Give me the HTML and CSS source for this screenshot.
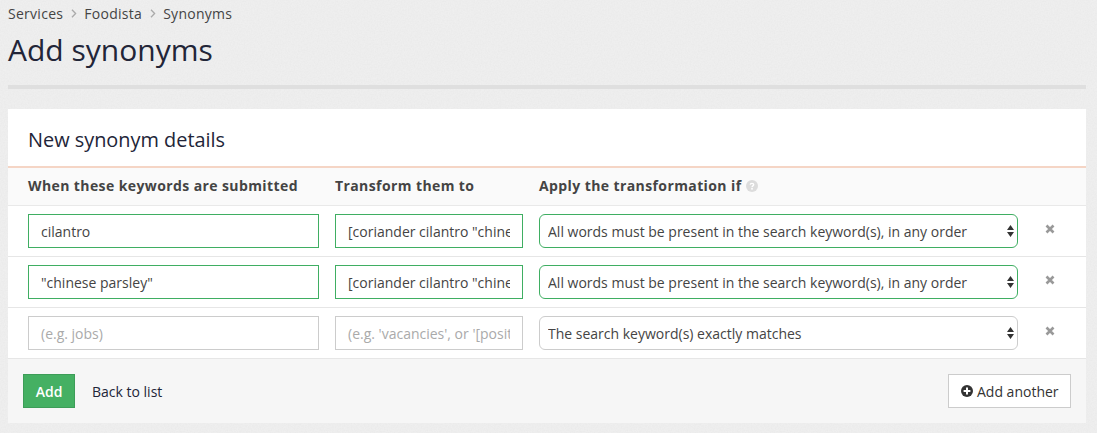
FILE: index.html
```html
<!DOCTYPE html>
<html lang="en">
<head>
    <meta charset="UTF-8">
    <meta name="viewport" content="width=device-width, initial-scale=1.0">
    <title>Add synonyms</title>
    <link rel="stylesheet" href="styles.css">
</head>
<body>

    <nav class="breadcrumb">
        <a href="#">Services</a>
        <svg class="crumb-sep" width="6" height="9" viewBox="0 0 6 9"><path d="M1 .8 4.6 4.5 1 8.2" fill="none" stroke="#aaa" stroke-width="1.3"/></svg>
        <a href="#">Foodista</a>
        <svg class="crumb-sep" width="6" height="9" viewBox="0 0 6 9"><path d="M1 .8 4.6 4.5 1 8.2" fill="none" stroke="#aaa" stroke-width="1.3"/></svg>
        <a href="#">Synonyms</a>
    </nav>
    <h1 class="page-title">Add synonyms</h1>

    <form class="panel">
        <h2 class="panel-title">New synonym details</h2>

        <div class="row head-row">
            <div class="col-from">When these keywords are submitted</div>
            <div class="col-to">Transform them to</div>
            <div class="col-if">Apply the transformation if
                <svg class="help-icon" width="12" height="12" viewBox="0 0 12 12"><circle cx="6" cy="6" r="6" fill="#dcdcdc"/><path d="M4.2 4.6C4.3 2.9 7.7 2.9 7.7 4.6 7.7 5.9 6 5.8 6 7.2" fill="none" stroke="#fff" stroke-width="1.4"/><rect x="5.2" y="8" width="1.6" height="1.6" fill="#fff"/></svg>
            </div>
        </div>

        <div class="row">
            <input class="field filled col-from" type="text" value="cilantro">
            <input class="field filled col-to" type="text" value="[coriander cilantro &quot;chinese parsley&quot;]">
            <div class="select-wrap col-if">
                <select class="field filled">
                    <option>All words must be present in the search keyword(s), in any order</option>
                </select>
                <svg class="select-arrows" width="7" height="12" viewBox="0 0 7 12"><path d="M3.5 0 7 5H0ZM3.5 12 0 7H7Z" fill="#333"/></svg>
            </div>
            <button class="remove" type="button">
                <svg width="10" height="10" viewBox="0 0 10 10"><path d="M1.5 1.5 8.5 8.5M8.5 1.5 1.5 8.5" stroke="#999" stroke-width="2.6"/></svg>
            </button>
        </div>

        <div class="row">
            <input class="field filled col-from" type="text" value="&quot;chinese parsley&quot;">
            <input class="field filled col-to" type="text" value="[coriander cilantro &quot;chinese parsley&quot;]">
            <div class="select-wrap col-if">
                <select class="field filled">
                    <option>All words must be present in the search keyword(s), in any order</option>
                </select>
                <svg class="select-arrows" width="7" height="12" viewBox="0 0 7 12"><path d="M3.5 0 7 5H0ZM3.5 12 0 7H7Z" fill="#333"/></svg>
            </div>
            <button class="remove" type="button">
                <svg width="10" height="10" viewBox="0 0 10 10"><path d="M1.5 1.5 8.5 8.5M8.5 1.5 1.5 8.5" stroke="#999" stroke-width="2.6"/></svg>
            </button>
        </div>

        <div class="row">
            <input class="field col-from" type="text" placeholder="(e.g. jobs)">
            <input class="field col-to" type="text" placeholder="(e.g. 'vacancies', or '[position job]')">
            <div class="select-wrap col-if">
                <select class="field">
                    <option>The search keyword(s) exactly matches</option>
                </select>
                <svg class="select-arrows" width="7" height="12" viewBox="0 0 7 12"><path d="M3.5 0 7 5H0ZM3.5 12 0 7H7Z" fill="#333"/></svg>
            </div>
            <button class="remove" type="button">
                <svg width="10" height="10" viewBox="0 0 10 10"><path d="M1.5 1.5 8.5 8.5M8.5 1.5 1.5 8.5" stroke="#999" stroke-width="2.6"/></svg>
            </button>
        </div>

        <div class="panel-footer">
            <button class="btn btn-add" type="button">Add</button>
            <a class="back-link" href="#">Back to list</a>
            <button class="btn btn-another" type="button">
                <svg width="12" height="12" viewBox="0 0 12 12"><circle cx="6" cy="6" r="6" fill="#333"/><path d="M6 2.6V9.4M2.6 6H9.4" stroke="#fff" stroke-width="2"/></svg>
                <span>Add another</span>
            </button>
        </div>
    </form>

</body>
</html>
```

FILE: styles.css
```css
body {
    font-family: "Open Sans", Arial, sans-serif;
    font-size: 14px;
    color: #222538;
    background-color: #f0f0f0;
    background-image: url("data:image/svg+xml,%3Csvg xmlns='http://www.w3.org/2000/svg' width='200' height='200'%3E%3Cfilter id='n'%3E%3CfeTurbulence type='fractalNoise' baseFrequency='0.7' numOctaves='2'/%3E%3CfeColorMatrix values='0 0 0 0 0.5 0 0 0 0 0.5 0 0 0 0 0.5 0 0 0 0.12 0'/%3E%3C/filter%3E%3Crect width='200' height='200' filter='url(%23n)'/%3E%3C/svg%3E");
    margin: 0;
    padding: 0 11px 0 8px;
}

.breadcrumb {
    display: flex;
    align-items: center;
    gap: 7.5px;
    height: 28px;
    font-size: 14px;
    letter-spacing: 0.28px;
    padding-bottom: 1px;
    box-sizing: border-box;
}
.breadcrumb a {
    color: #444;
    text-decoration: none;
}

.page-title {
    font-size: 30px;
    font-weight: 400;
    line-height: 44px;
    margin: 0;
    padding-bottom: 13px;
    border-bottom: 4px solid #dfdfdf;
}

.panel {
    background: #ffffff;
    margin-top: 20px;
}
.panel-title {
    font-size: 19.9px;
    font-weight: 400;
    line-height: 62px;
    height: 57px;
    margin: 0;
    padding-left: 20px;
    border-bottom: 2px solid #f5d5c5;
}

.row {
    display: flex;
    align-items: center;
    gap: 16px;
    height: 50px;
    padding-left: 20px;
    border-bottom: 1px solid #e6e6e6;
}
.head-row {
    height: 38px;
    padding-bottom: 2px;
    box-sizing: border-box;
    background: #fafafa;
    font-weight: 700;
    letter-spacing: 0.4px;
    color: #444;
    border-bottom: 1px solid #e9e9e9;
}

.col-from {
    width: 291px;
    flex: none;
}
.col-to {
    width: 188px;
    flex: none;
}
.col-if {
    width: 479px;
    flex: none;
}

.help-icon {
    margin-left: 0;
    vertical-align: -1px;
}

.field {
    font-family: inherit;
    font-size: 14px;
    color: #444;
    height: 34px;
    padding: 0 12px;
    border: 1px solid #ccc;
    border-radius: 0;
    background: #fff;
    box-sizing: border-box;
    outline: none;
}
.field::placeholder {
    color: #aaa;
    opacity: 1;
}
.field.filled {
    border-color: #3fae62;
}

.select-wrap {
    position: relative;
}
.select-wrap select {
    width: 100%;
    padding: 0 24px 0 8px;
    border-radius: 6px;
    appearance: none;
    -webkit-appearance: none;
}
.select-arrows {
    position: absolute;
    top: 11px;
    right: 4px;
    pointer-events: none;
}

.remove {
    border: none;
    background: none;
    padding: 0;
    margin: 0 0 5px 11px;
    width: 10px;
    height: 10px;
    line-height: 0;
    cursor: pointer;
}

.panel-footer {
    display: flex;
    align-items: center;
    height: 64px;
    padding: 0 15px;
    background: #f6f6f6;
}

.btn {
    font-family: inherit;
    font-size: 14px;
    height: 34px;
    border-radius: 0;
    cursor: pointer;
}
.btn-add {
    width: 52px;
    padding: 0;
    font-weight: 600;
    color: #fff;
    background: #45b063;
    border: 1px solid #3d9d58;
}
.back-link {
    color: #222538;
    text-decoration: none;
    margin-left: 17px;
}
.btn-another {
    display: flex;
    align-items: center;
    gap: 4px;
    margin-left: auto;
    width: 123px;
    padding: 0 0 0 12px;
    white-space: nowrap;
    color: #333;
    background: #fff;
    border: 1px solid #ccc;
}
```
